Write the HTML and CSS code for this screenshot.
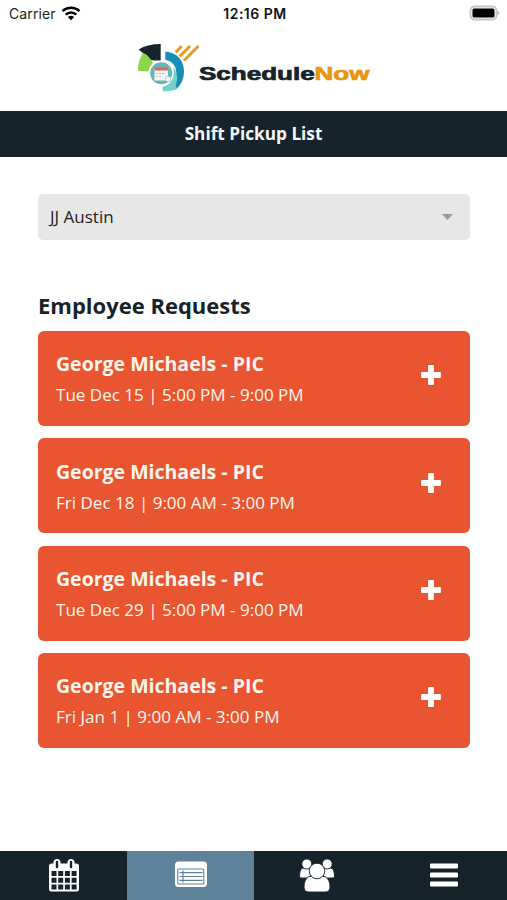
FILE: index.html
```html
<!DOCTYPE html>
<html lang="en">
<head>
<meta charset="utf-8">
<title>ScheduleNow - Shift Pickup List</title>
<link rel="stylesheet" href="styles.css">
</head>
<body>
<div class="app">
  <header class="status">
    <div class="carrier"><span>Carrier</span>
      <svg width="20" height="15" viewBox="0 0 20 15" fill="none" stroke="#000" stroke-width="2.5"><path d="M1.500 5.200a12.300 12.300 0 0 1 17 0M4.700 8.600a7.600 7.600 0 0 1 10.600 0"/><path d="M10 14.200 6.900 11.100a4.500 4.500 0 0 1 6.200 0Z" fill="#000" stroke="none"/></svg>
    </div>
    <time class="clock">12:16 PM</time>
    <svg class="battery" width="32" height="16" viewBox="0 0 32 16"><rect x="1.500" y="1.500" width="26" height="13" rx="4" fill="#fff" stroke="#c4c4c4" stroke-width="1.800"/><rect x="3.500" y="3.500" width="22" height="9" rx="1.500"/><path d="M28.500 5.500q4 2.500 0 5Z" fill="#bbb"/></svg>
  </header>
  <div class="brand">
    <svg width="240" height="56" viewBox="134 40 240 56" role="img" aria-label="ScheduleNow">
      <path d="M160.700 44V60.500H154L151 60L138.700 49.500Q147 44 160.700 44Z" fill="#17232a"/>
      <path d="M142.800 53.500Q147 52.500 153 63Q149 67 148.500 71.500L137.800 70.800Q138 60 142.800 53.500Z" fill="#8bd64b"/>
      <path d="M165.300 51.500C177 52.500 184 60.500 184 71 184 79 181 85.500 175.500 89.500L171.500 83.500Q176.300 79 176.300 73C176.300 66 172 61 165.300 59.800Z" fill="#168fb8"/>
      <path d="M173 66.500Q179.500 75 175.800 85.500L177 89Q171 92 162.500 91V87Q175 84 173 66.500Z" fill="#75d1ca"/>
      <circle cx="161.200" cy="73.300" r="12.500" fill="#fff"/>
      <circle cx="161.200" cy="73.300" r="11" fill="#65b5ba"/>
      <path d="M154.500 68H168V80.500H154.500Z" fill="#f8f6f7"/>
      <path d="M154.500 67.500H168V70.500H154.500Z" fill="#df6555"/>
      <path d="M156 73.500H165M156 76.500H162" stroke="#c4c1c2" stroke-width="1.200" stroke-dasharray="2 1"/>
      <circle cx="168" cy="79" r="2.800" fill="#eef7f6" stroke="#88b5b8" stroke-width=".6"/>
      <path d="m175.700 52.500 6-6.500M179.700 56.500l10.300-10.500M184 60.500 198.500 46" stroke="#e99b20" stroke-width="3"/>
      <text class="wordmark" x="199" y="79.800" textLength="170.500" lengthAdjust="spacingAndGlyphs"><tspan fill="#17232a" stroke="#17232a">Schedule</tspan><tspan fill="#e8950f" stroke="#e8950f">Now</tspan></text>
    </svg>
  </div>
  <h1 class="title">Shift Pickup List</h1>
  <main class="content">
    <div class="select" role="button"><span>JJ Austin</span><i class="caret"></i></div>
    <h2 class="heading">Employee Requests</h2>
    <section class="list">
      <article class="card"><div><h3>George Michaels - PIC</h3><p>Tue Dec 15 | 5:00 PM - 9:00 PM</p></div><svg class="plus" viewBox="0 0 20 20"><path d="M8 1h4v7h7v4h-7v7H8v-7H1V8h7Z"/></svg></article>
      <article class="card"><div><h3>George Michaels - PIC</h3><p>Fri Dec 18 | 9:00 AM - 3:00 PM</p></div><svg class="plus" viewBox="0 0 20 20"><path d="M8 1h4v7h7v4h-7v7H8v-7H1V8h7Z"/></svg></article>
      <article class="card"><div><h3>George Michaels - PIC</h3><p>Tue Dec 29 | 5:00 PM - 9:00 PM</p></div><svg class="plus" viewBox="0 0 20 20"><path d="M8 1h4v7h7v4h-7v7H8v-7H1V8h7Z"/></svg></article>
      <article class="card"><div><h3>George Michaels - PIC</h3><p>Fri Jan 1 | 9:00 AM - 3:00 PM</p></div><svg class="plus" viewBox="0 0 20 20"><path d="M8 1h4v7h7v4h-7v7H8v-7H1V8h7Z"/></svg></article>
    </section>
  </main>
  <nav class="tabs">
    <a class="tab"><svg width="32" height="34" viewBox="0 0 32 34"><rect x="1" y="4.500" width="30" height="28" rx="2.500" fill="#fff"/><rect x="5.500" y="0" width="7" height="11" rx="3.500" fill="#fff"/><rect x="19.500" y="0" width="7" height="11" rx="3.500" fill="#fff"/><path d="M9 3v5M23 3v5" stroke="#17232a" stroke-width="2.400" stroke-linecap="round"/><path d="M3.500 12h5v5h-5zM10.200 12h5v5h-5zM16.900 12h5v5h-5zM23.600 12h5v5h-5zM3.500 18.700h5v5h-5zM10.200 18.700h5v5h-5zM16.900 18.700h5v5h-5zM23.600 18.700h5v5h-5zM3.500 25.400h5v5h-5zM10.200 25.400h5v5h-5zM16.900 25.400h5v5h-5zM23.600 25.400h5v5h-5z" fill="#17232a"/></svg></a>
    <a class="tab active"><svg width="34" height="34" viewBox="0 0 34 34"><rect x="1" y="2.500" width="32" height="25.500" rx="3.500" fill="#fff"/><rect x="3.800" y="10" width="26" height="15" rx="1" fill="none" stroke="#5e8299" stroke-width="1.100"/><path d="M5.500 13.700H28.500M5.500 17.500H28.500M5.500 21.300H28.500M9 11.500V23.500" stroke="#5e8299" stroke-width="1.200"/></svg></a>
    <a class="tab"><svg class="people" width="36" height="34" viewBox="0 0 36 34" fill="#fff" stroke="#17232a" stroke-width=".9"><path d="M.5 18q0-9 4-9h7v10h-8q-3 0-3-1ZM35.500 18q0-9-4-9h-7v10h8q3 0 3-1Z"/><circle cx="7.800" cy="5" r="5"/><circle cx="28.200" cy="5" r="5"/><path d="M10 17.500h16q5 3 5 10.500 0 5-5 5H10q-5 0-5-5 0-7.500 5-10.500Z"/><circle cx="18" cy="12" r="7.800"/></svg></a>
    <a class="tab"><svg width="28" height="34" viewBox="0 0 28 34" fill="#fff"><rect y="4.500" width="28" height="5" rx="1"/><rect y="13.500" width="28" height="5" rx="1"/><rect y="22.500" width="28" height="5" rx="1"/></svg></a>
  </nav>
</div>
</body>
</html>
```
FILE: styles.css
```css
* { box-sizing: border-box; }
body, h1, h2, h3, p { margin: 0; }
body { background: #fff; color: #17232a; font-family: "Open Sans", sans-serif; }
.app { height: 900px; width: 507px; display: flex; flex-direction: column; overflow: hidden; }
.status { height: 28px; padding: 0 6px 0 9px; display: grid; grid-template-columns: 1fr auto 1fr; align-items: center; font: 14px/28px Inter, sans-serif; color: #222; }
.carrier { display: flex; align-items: center; gap: 5px; letter-spacing: .1px; }
.carrier svg { margin-top: -2px; }
.clock { color: #111; font-weight: 600; letter-spacing: .5px; }
.battery { justify-self: end; margin-top: -2px; }
.brand { height: 83px; padding-top: 12px; display: flex; justify-content: center; }
.wordmark { font: bold 18.5px "Liberation Sans", sans-serif; stroke-width: .7px; }
.title { height: 46px; background: #17232a; color: #f3faff; font-size: 17.2px; line-height: 46px; text-align: center; }
.content { flex: 1; padding: 37px 37px 0 38px; }
.select { height: 46px; padding: 0 17px 1px 12px; display: flex; align-items: center; justify-content: space-between; background: #e7e7e7; border-radius: 5px; color: #222; font-size: 17px; }
.caret { width: 11px; height: 6px; margin-top: 1px; background: #999; clip-path: polygon(0 0, 100% 0, 50% 100%); }
.heading { margin-top: 48px; font-size: 22px; line-height: 34px; }
.list { margin-top: 9px; display: grid; gap: 12.4px; }
.card { height: 95px; padding: 18.3px 29px 0 18px; display: flex; justify-content: space-between; background: #e95531; border-radius: 6px; color: #fff5ec; }
.card h3 { font-size: 19.5px; line-height: 30px; }
.card p { font-size: 17.05px; line-height: 32.6px; }
.plus { width: 20px; height: 20px; margin-top: 16px; fill: #fff; stroke: #fff; stroke-width: 1.8px; stroke-linejoin: round; }
.tabs { height: 49px; display: grid; grid-template-columns: 127px 127px 127px 126px; background: #17232a; }
.tab { display: flex; justify-content: center; padding-top: 8px; }
.people { margin-right: 1px; }
.active { background: #5e8299; }
```
